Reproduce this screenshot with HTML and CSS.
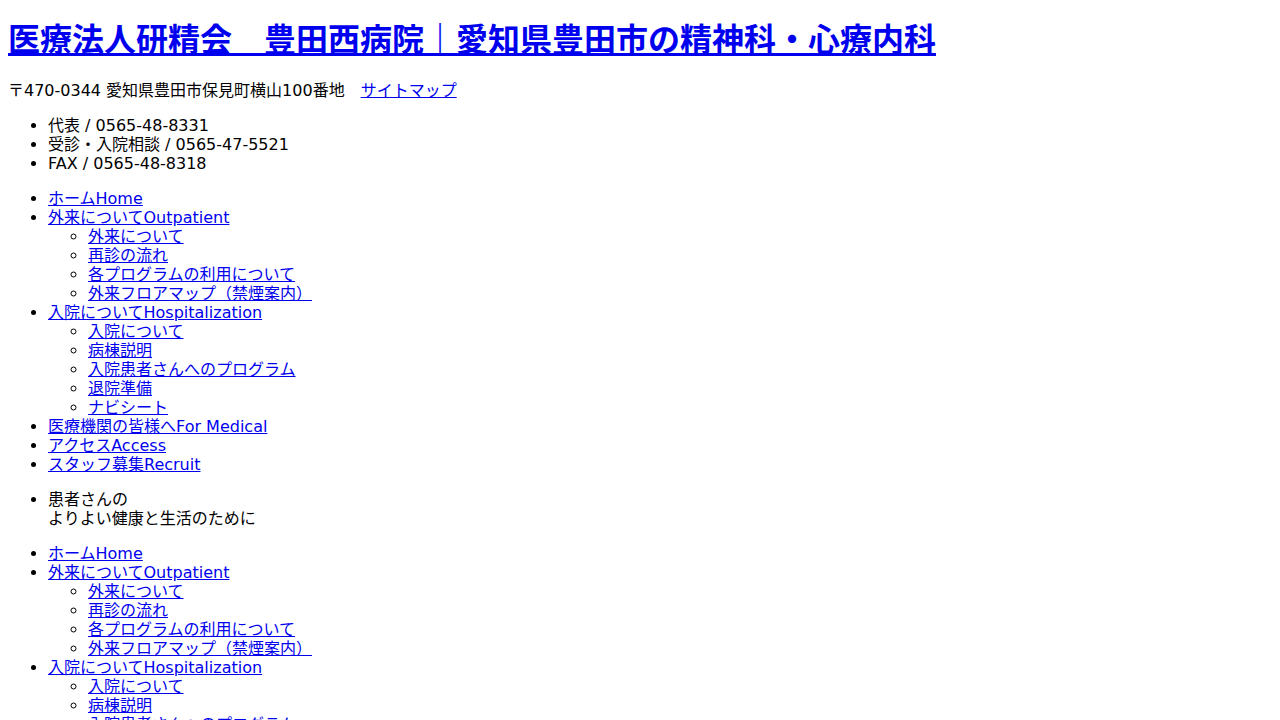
FILE: index.html
```html
<!DOCTYPE html>
<html lang="ja">
<head>
<meta charset="utf-8">
<title>豊田西病院</title>
<link rel="stylesheet" href="styles.css">
</head>
<body>
<header class="site-header">
<h1 class="site-title"><a href="#">医療法人研精会　豊田西病院｜愛知県豊田市の精神科・心療内科</a></h1>
<p class="address">〒470-0344 愛知県豊田市保見町横山100番地　<a href="#">サイトマップ</a></p>
<ul class="tel-list">
<li>代表 / 0565-48-8331</li>
<li>受診・入院相談 / 0565-47-5521</li>
<li>FAX / 0565-48-8318</li>
</ul>
</header>
<nav class="gnav">
<ul>
<li><a href="#">ホームHome</a></li>
<li><a href="#">外来についてOutpatient</a>
<ul>
<li><a href="#">外来について</a></li>
<li><a href="#">再診の流れ</a></li>
<li><a href="#">各プログラムの利用について</a></li>
<li><a href="#">外来フロアマップ（禁煙案内）</a></li>
</ul>
</li>
<li><a href="#">入院についてHospitalization</a>
<ul>
<li><a href="#">入院について</a></li>
<li><a href="#">病棟説明</a></li>
<li><a href="#">入院患者さんへのプログラム</a></li>
<li><a href="#">退院準備</a></li>
<li><a href="#">ナビシート</a></li>
</ul>
</li>
<li><a href="#">医療機関の皆様へFor Medical</a></li>
<li><a href="#">アクセスAccess</a></li>
<li><a href="#">スタッフ募集Recruit</a></li>
</ul>
</nav>
<ul class="catch">
<li>患者さんの<br>よりよい健康と生活のために</li>
</ul>
<nav class="gnav">
<ul>
<li><a href="#">ホームHome</a></li>
<li><a href="#">外来についてOutpatient</a>
<ul>
<li><a href="#">外来について</a></li>
<li><a href="#">再診の流れ</a></li>
<li><a href="#">各プログラムの利用について</a></li>
<li><a href="#">外来フロアマップ（禁煙案内）</a></li>
</ul>
</li>
<li><a href="#">入院についてHospitalization</a>
<ul>
<li><a href="#">入院について</a></li>
<li><a href="#">病棟説明</a></li>
<li><a href="#">入院患者さんへのプログラム</a></li>
<li><a href="#">退院準備</a></li>
<li><a href="#">ナビシート</a></li>
</ul>
</li>
<li><a href="#">医療機関の皆様へFor Medical</a></li>
<li><a href="#">アクセスAccess</a></li>
<li><a href="#">スタッフ募集Recruit</a></li>
</ul>
</nav>
</body>
</html>
```
FILE: styles.css
```css
body {
  font-family: "DejaVu Sans", "Noto Sans CJK JP", sans-serif;
  font-size: 16px;
  line-height: 19px;
  color: #000;
  background: #fff;
}
.site-title {
  line-height: 40px;
  margin: 12px 0 21px;
}
```
